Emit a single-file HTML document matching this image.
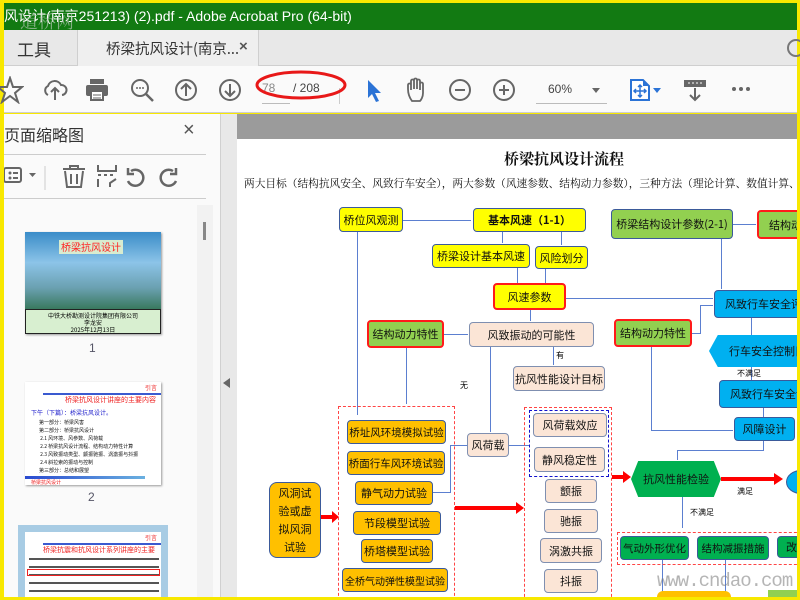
<!DOCTYPE html>
<html><head><meta charset="utf-8"><style>
*{margin:0;padding:0;box-sizing:border-box}
body{width:800px;height:600px;overflow:hidden;background:#f8e800;position:relative;font-family:"Liberation Sans","Noto Sans CJK SC",sans-serif}
.a{position:absolute}
.b{position:absolute;display:flex;align-items:center;justify-content:center;font-size:11px;color:#111;border:1px solid #3b5a9a;border-radius:4px;white-space:nowrap;overflow:hidden;font-family:"Noto Sans CJK SC",sans-serif}
.y{background:#ffff00}.g{background:#92d050}.p{background:#fbe5d6;border-color:#7f8fb0}.o{background:#ffc000}.bl{background:#00b0f0}.dg{background:#00b050}
.r{border:2px solid #ff1a1a}
.ln{position:absolute;background:#5b7fd0}
.ico{position:absolute}
</style></head><body>
<!-- title bar -->
<div class="a" style="left:4px;top:3px;width:793px;height:27px;background:#127a12;color:#fff;font-size:14px;line-height:27px;white-space:nowrap;overflow:hidden;font-family:'Liberation Sans','Noto Sans CJK SC',sans-serif">风设计(南京251213) (2).pdf - Adobe Acrobat Pro (64-bit)</div>
<div class="a" style="left:20px;top:8px;color:rgba(180,200,180,.7);font-size:18px;font-family:'Noto Serif CJK SC',serif">道桥网</div>
<!-- tab bar -->
<div class="a" style="left:4px;top:30px;width:793px;height:36px;background:#e8e8e8;border-bottom:1px solid #cfcfcf"></div>
<div class="a" style="left:4px;top:30px;width:74px;height:36px;border-right:1px solid #cfcfcf;"></div>
<div class="a" style="left:17px;top:36px;font-size:17px;color:#333;font-family:'Noto Sans CJK SC',sans-serif">工具</div>
<div class="a" style="left:78px;top:30px;width:181px;height:36px;background:#efefef;border-right:1px solid #cfcfcf"></div>
<div class="a" style="left:106px;top:38px;font-size:14.5px;color:#333;font-family:'Noto Sans CJK SC',sans-serif">桥梁抗风设计(南京...</div>
<div class="a" style="left:239px;top:38px;font-size:15px;color:#555;font-weight:bold">×</div>
<div class="a" style="left:787px;top:39px;width:18px;height:18px;border:2px solid #777;border-radius:50%"></div>
<!-- toolbar -->
<div class="a" style="left:4px;top:66px;width:793px;height:47px;background:#fafafa;border-bottom:1px solid #cfcfcf"></div>
<svg class="ico" style="left:0;top:76px" width="24" height="28"><path d="M10 2 L13 11 L22 11 L15 17 L18 26 L10 20 L2 26 L5 17 L-2 11 L7 11Z" fill="none" stroke="#666" stroke-width="2"/></svg>
<svg class="ico" style="left:42px;top:78px" width="26" height="24"><path d="M6 17 A5 5 0 0 1 6 8 A7 7 0 0 1 19 7 A5 5 0 0 1 20 17" fill="none" stroke="#666" stroke-width="2"/><path d="M13 22 V10 M9 14 L13 10 L17 14" fill="none" stroke="#666" stroke-width="2"/></svg>
<svg class="ico" style="left:85px;top:78px" width="24" height="24"><rect x="5" y="1" width="14" height="5" fill="#666"/><rect x="1" y="7" width="22" height="11" rx="2" fill="#666"/><rect x="6" y="13" width="12" height="9" fill="#fff" stroke="#666" stroke-width="2"/><path d="M8 17h8M8 20h8" stroke="#666"/></svg>
<svg class="ico" style="left:130px;top:78px" width="26" height="26"><circle cx="10" cy="10" r="8" fill="none" stroke="#666" stroke-width="2"/><path d="M16 16 L23 23" stroke="#666" stroke-width="2.5"/><circle cx="7" cy="10" r="1" fill="#666"/><circle cx="10" cy="10" r="1" fill="#666"/><circle cx="13" cy="10" r="1" fill="#666"/></svg>
<svg class="ico" style="left:175px;top:79px" width="24" height="24"><circle cx="11" cy="11" r="10" fill="none" stroke="#666" stroke-width="2"/><path d="M11 17V5M6 10l5-5 5 5" fill="none" stroke="#666" stroke-width="2"/></svg>
<svg class="ico" style="left:219px;top:79px" width="24" height="24"><circle cx="11" cy="11" r="10" fill="none" stroke="#666" stroke-width="2"/><path d="M11 5v12M6 12l5 5 5-5" fill="none" stroke="#666" stroke-width="2"/></svg>
<div class="a" style="left:262px;top:81px;font-size:12px;color:#888">78</div>
<div class="a" style="left:262px;top:103px;width:28px;border-top:1px solid #bbb"></div>
<div class="a" style="left:293px;top:81px;font-size:12px;color:#444">/ 208</div>
<div class="a" style="left:339px;top:88px;height:16px;border-left:1px solid #ccc"></div>
<svg class="ico" style="left:254px;top:68px" width="96" height="36"><ellipse cx="47" cy="17" rx="44" ry="13" fill="none" stroke="#e81818" stroke-width="3"/></svg>
<svg class="ico" style="left:366px;top:79px" width="18" height="24"><path d="M2 1 L2 19 L6 15 L10 23 L13 22 L9 14 L15 14Z" fill="#2b73d6"/></svg>
<svg class="ico" style="left:405px;top:77px" width="26" height="26"><path d="M7 24 C4 20 3 16 3 12 V8 a1.5 1.5 0 0 1 3 0 V13 V4 a1.5 1.5 0 0 1 3 0 V12 V3 a1.5 1.5 0 0 1 3 0 V12 V4 a1.5 1.5 0 0 1 3 0 V13 V7 a1.5 1.5 0 0 1 3 0 V16 C18 20 16 23 15 24Z" fill="none" stroke="#666" stroke-width="1.8"/></svg>
<svg class="ico" style="left:448px;top:79px" width="24" height="24"><circle cx="12" cy="11" r="10" fill="none" stroke="#666" stroke-width="2"/><path d="M7 11h10" stroke="#666" stroke-width="2"/></svg>
<svg class="ico" style="left:492px;top:79px" width="24" height="24"><circle cx="12" cy="11" r="10" fill="none" stroke="#666" stroke-width="2"/><path d="M7 11h10M12 6v10" stroke="#666" stroke-width="2"/></svg>
<div class="a" style="left:548px;top:82px;font-size:12px;color:#444">60%</div>
<div class="a" style="left:592px;top:88px;border:4px solid transparent;border-top:5px solid #666"></div>
<div class="a" style="left:536px;top:103px;width:71px;border-top:1px solid #bbb"></div>
<svg class="ico" style="left:629px;top:78px" width="34" height="24"><path d="M2 2 H14 L20 8 V22 H2Z" fill="#fff" stroke="#2b73d6" stroke-width="2"/><path d="M14 2 V8 H20" fill="#2b73d6"/><path d="M11 7 V19 M5 13 H17 M9 9l2-2 2 2M9 17l2 2 2-2M7 11l-2 2 2 2M15 11l2 2-2 2" fill="none" stroke="#2b73d6" stroke-width="1.5"/><path d="M24 10 h8 l-4 5z" fill="#2b73d6"/></svg>
<svg class="ico" style="left:683px;top:79px" width="26" height="24"><rect x="1" y="1" width="22" height="7" fill="#666"/><path d="M5 4h2M9 4h2M13 4h2M17 4h2" stroke="#fff"/><path d="M12 9 V21 M7 16 l5 5 5-5" fill="none" stroke="#666" stroke-width="2"/></svg>
<div class="a" style="left:732px;top:87px;width:4px;height:4px;border-radius:2px;background:#666;box-shadow:7px 0 #666,14px 0 #666"></div>
<!-- left panel -->
<div class="a" style="left:4px;top:114px;width:216px;height:483px;background:#fafafa"></div>
<div class="a" style="left:220px;top:114px;width:17px;height:483px;background:#e8e8e8;border-left:1px solid #d0d0d0"></div>
<div class="a" style="left:223px;top:378px;border:5px solid transparent;border-right:7px solid #666;border-left:0"></div>
<div class="a" style="left:4px;top:122px;font-size:16px;color:#333;font-family:'Noto Sans CJK SC',sans-serif">页面缩略图</div>
<div class="a" style="left:183px;top:119px;font-size:20px;color:#555">×</div>
<div class="a" style="left:4px;top:154px;width:202px;border-top:1px solid #ccc"></div>
<div class="a" style="left:4px;top:198px;width:202px;border-top:1px solid #ccc"></div>
<svg class="ico" style="left:4px;top:164px" width="180" height="26"><rect x="0" y="4" width="17" height="14" rx="2" fill="none" stroke="#666" stroke-width="2"/><circle cx="6" cy="9" r="1.5" fill="#666"/><circle cx="6" cy="14" r="1.5" fill="#666"/><path d="M9 9h5M9 14h5" stroke="#666" stroke-width="2"/><path d="M25 9h7l-3.5 4z" fill="#666"/><path d="M41 2v26" stroke="#ccc"/><path d="M59 5h22M66 5V2h8v3M61 7l2 16h14l2-16M67 10v10M73 10v10" fill="none" stroke="#666" stroke-width="2"/><path d="M94 1v6h18V1M94 11h3M100 11h3M106 11h3M94 15v8M112 15l-6 4v4" fill="none" stroke="#666" stroke-width="2"/><path d="M124 17 A8 8 0 1 0 127 7 M124 4 v6 h6" fill="none" stroke="#666" stroke-width="2.5"/><path d="M172 17 A8 8 0 1 1 169 7 M172 4 v6 h-6" fill="none" stroke="#666" stroke-width="2.5"/></svg>
<div class="a" style="left:197px;top:205px;width:16px;height:392px;background:#f2f2f2"></div>
<div class="a" style="left:203px;top:222px;width:3px;height:18px;background:#888"></div>
<!-- thumb1 -->
<div class="a" style="left:25px;top:232px;width:136px;height:102px;background:linear-gradient(#3a8cc8,#8cc4e8 30%,#6aa0b0 55%,#3a7a60 75%,#2a6050);box-shadow:1px 1px 2px #999"></div>
<div class="a" style="left:59px;top:240px;width:64px;height:14px;background:#d8ecd0;color:#f22;font-size:10px;text-align:center;line-height:14px;font-family:'Noto Sans CJK SC',sans-serif">桥梁抗风设计</div>
<div class="a" style="left:25px;top:309px;width:136px;height:25px;background:#d8efd0;border:1px solid #222;font-size:6px;text-align:center;line-height:7px;padding-top:2px;font-family:'Noto Sans CJK SC',sans-serif">中铁大桥勘测设计院集团有限公司<br>李龙安<br>2025年12月13日</div>
<div class="a" style="left:89px;top:341px;font-size:12px;color:#556">1</div>
<!-- thumb2 -->
<div class="a" style="left:25px;top:382px;width:136px;height:103px;background:#fff;box-shadow:1px 1px 2px #999;overflow:hidden;font-family:'Noto Sans CJK SC',sans-serif">
<div class="a" style="left:120px;top:1px;font-size:6px;color:#e22">引言</div>
<div class="a" style="left:18px;top:11px;width:118px;height:2px;background:#3a5ad0"></div>
<div class="a" style="left:40px;top:13px;font-size:7px;color:#e22">桥梁抗风设计讲座的主要内容</div>
<div class="a" style="left:6px;top:27px;font-size:6px;color:#22c;line-height:8px">下午（下篇）：桥梁抗风设计。</div>
<div class="a" style="left:14px;top:37px;font-size:5px;line-height:8px;color:#111">第一部分：桥梁风害<br>第二部分：桥梁抗风设计<br>&nbsp;2.1 风环境、风参数、风荷载<br>&nbsp;2.2 桥梁抗风设计流程、结构动力特性计算<br>&nbsp;2.3 风致振动类型、颤振驰振、涡激振与抖振<br>&nbsp;2.4 斜拉索的振动与控制<br>第三部分：总结和展望</div>
<div class="a" style="left:0;top:94px;width:120px;height:3px;background:linear-gradient(90deg,#2a4ad0,#6ab0e0)"></div>
<div class="a" style="left:6px;top:97px;font-size:5px;color:#e22">桥梁抗风设计</div>
</div>
<div class="a" style="left:88px;top:490px;font-size:12px;color:#556">2</div>
<!-- thumb3 -->
<div class="a" style="left:18px;top:525px;width:150px;height:72px;background:#a8cce4"></div>
<div class="a" style="left:25px;top:532px;width:136px;height:65px;background:#fff;overflow:hidden;font-family:'Noto Sans CJK SC',sans-serif">
<div class="a" style="left:120px;top:1px;font-size:6px;color:#e22">引言</div>
<div class="a" style="left:18px;top:11px;width:118px;height:2px;background:#3a5ad0"></div>
<div class="a" style="left:18px;top:13px;font-size:7px;color:#e22">桥梁抗震和抗风设计系列讲座的主要参考文献</div>
<div class="a" style="left:4px;top:23px;width:130px;height:40px;background:repeating-linear-gradient(#fff 0,#fff 3px,#555 3px,#555 5px,#fff 5px,#fff 8px)"></div>
<div class="a" style="left:2px;top:37px;width:133px;height:7px;border:1px solid #e22"></div>
</div>
<!-- main area -->
<div class="a" style="left:237px;top:114px;width:560px;height:25px;background:#9b9b9b"></div>
<div class="a" style="left:237px;top:139px;width:560px;height:458px;background:#fff;overflow:hidden">
<div style="position:absolute;left:0;top:0;width:800px;height:600px;transform:translate(-237px,-139px)">
<div class="a" style="left:504px;top:148px;font-size:15px;font-family:'Noto Serif CJK SC',serif;color:#111;font-weight:bold">桥梁抗风设计流程</div>
<div class="a" style="left:244px;top:176px;font-size:10.7px;font-family:'Noto Serif CJK SC',serif;color:#111;white-space:nowrap">两大目标（结构抗风安全、风致行车安全），两大参数（风速参数、结构动力参数），三种方法（理论计算、数值计算、风洞试验）</div>
<!-- lines -->
<div class="ln" style="left:403px;top:220px;width:68px;height:1px"></div>
<div class="ln" style="left:357px;top:232px;width:1px;height:183px"></div>
<div class="ln" style="left:502px;top:232px;width:1px;height:11px"></div>
<div class="ln" style="left:561px;top:232px;width:1px;height:13px"></div>
<div class="ln" style="left:517px;top:268px;width:1px;height:15px"></div>
<div class="ln" style="left:545px;top:269px;width:1px;height:14px"></div>
<div class="ln" style="left:566px;top:298px;width:147px;height:1px"></div>
<div class="ln" style="left:530px;top:310px;width:1px;height:11px"></div>
<div class="ln" style="left:444px;top:334px;width:24px;height:1px"></div>
<div class="ln" style="left:406px;top:348px;width:1px;height:56px"></div>
<div class="ln" style="left:490px;top:347px;width:1px;height:85px"></div>
<div class="ln" style="left:553px;top:347px;width:1px;height:18px"></div>
<div class="ln" style="left:733px;top:224px;width:23px;height:1px"></div>
<div class="ln" style="left:721px;top:239px;width:1px;height:50px"></div>
<div class="ln" style="left:692px;top:333px;width:8px;height:1px"></div>
<div class="ln" style="left:700px;top:305px;width:1px;height:29px"></div>
<div class="ln" style="left:700px;top:305px;width:13px;height:1px"></div>
<div class="ln" style="left:651px;top:347px;width:1px;height:83px"></div>
<div class="ln" style="left:651px;top:430px;width:82px;height:1px"></div>
<div class="ln" style="left:751px;top:318px;width:1px;height:17px"></div>
<div class="ln" style="left:751px;top:367px;width:1px;height:13px"></div>
<div class="ln" style="left:763px;top:408px;width:1px;height:9px"></div>
<div class="ln" style="left:763px;top:441px;width:1px;height:9px"></div>
<div class="ln" style="left:677px;top:450px;width:87px;height:1px"></div>
<div class="ln" style="left:677px;top:450px;width:1px;height:10px"></div>
<div class="ln" style="left:433px;top:492px;width:17px;height:1px"></div>
<div class="ln" style="left:450px;top:445px;width:1px;height:48px"></div>
<div class="ln" style="left:450px;top:445px;width:17px;height:1px"></div>
<div class="ln" style="left:509px;top:445px;width:20px;height:1px"></div>
<div class="ln" style="left:682px;top:497px;width:1px;height:31px"></div>
<div class="ln" style="left:662px;top:560px;width:1px;height:32px"></div>
<div class="ln" style="left:725px;top:560px;width:1px;height:32px"></div>
<div class="a" style="left:460px;top:380px;font-size:8px;font-family:'Noto Sans CJK SC',sans-serif">无</div>
<div class="a" style="left:556px;top:350px;font-size:8px;font-family:'Noto Sans CJK SC',sans-serif">有</div>
<div class="a" style="left:737px;top:368px;font-size:8px;font-family:'Noto Sans CJK SC',sans-serif">不满足</div>
<div class="a" style="left:737px;top:486px;font-size:8px;font-family:'Noto Sans CJK SC',sans-serif">满足</div>
<div class="a" style="left:690px;top:507px;font-size:8px;font-family:'Noto Sans CJK SC',sans-serif">不满足</div>
<!-- red arrows -->
<div class="a" style="left:321px;top:515px;width:12px;height:4px;background:#f00"></div><div class="a" style="left:332px;top:511px;border:6px solid transparent;border-left:7px solid #f00;border-right:0"></div>
<div class="a" style="left:455px;top:506px;width:62px;height:4px;background:#f00"></div><div class="a" style="left:516px;top:502px;border:6px solid transparent;border-left:8px solid #f00;border-right:0"></div>
<div class="a" style="left:612px;top:475px;width:12px;height:4px;background:#f00"></div><div class="a" style="left:623px;top:471px;border:6px solid transparent;border-left:8px solid #f00;border-right:0"></div>
<div class="a" style="left:721px;top:477px;width:54px;height:4px;background:#f00"></div><div class="a" style="left:774px;top:473px;border:6px solid transparent;border-left:9px solid #f00;border-right:0"></div>
<!-- dashed boxes -->
<div class="a" style="left:338px;top:406px;width:117px;height:200px;border:1px dashed #f44"></div>
<div class="a" style="left:524px;top:407px;width:88px;height:200px;border:1px dashed #f44"></div>
<div class="a" style="left:529px;top:410px;width:80px;height:67px;border:1.5px dashed #11c"></div>
<div class="a" style="left:617px;top:532px;width:190px;height:33px;border:1px dashed #f44"></div>
<!-- boxes -->
<div class="b y" style="left:339px;top:207px;width:64px;height:25px">桥位风观测</div>
<div class="b y" style="left:473px;top:208px;width:113px;height:24px;font-weight:bold">基本风速（1-1）</div>
<div class="b y" style="left:432px;top:244px;width:98px;height:24px">桥梁设计基本风速</div>
<div class="b y" style="left:535px;top:246px;width:53px;height:23px">风险划分</div>
<div class="b y r" style="left:493px;top:283px;width:73px;height:27px">风速参数</div>
<div class="b g r" style="left:367px;top:320px;width:77px;height:28px">结构动力特性</div>
<div class="b p" style="left:469px;top:322px;width:125px;height:25px">风致振动的可能性</div>
<div class="b g" style="left:611px;top:209px;width:122px;height:30px">桥梁结构设计参数(2-1)</div>
<div class="b g r" style="left:757px;top:210px;width:70px;height:29px;justify-content:flex-start;padding-left:10px">结构动力特性</div>
<div class="b bl" style="left:714px;top:290px;width:110px;height:28px;justify-content:flex-start;padding-left:10px">风致行车安全评估</div>
<div class="b g r" style="left:614px;top:319px;width:78px;height:28px">结构动力特性</div>
<div class="b bl" style="left:709px;top:335px;width:110px;height:32px;border:none;border-radius:0;clip-path:polygon(8% 0,100% 0,100% 100%,8% 100%,0 50%);justify-content:flex-start;padding-left:20px">行车安全控制目标</div>
<div class="b bl" style="left:719px;top:380px;width:100px;height:28px;justify-content:flex-start;padding-left:10px">风致行车安全设计</div>
<div class="b bl" style="left:734px;top:417px;width:61px;height:24px">风障设计</div>
<div class="b p" style="left:513px;top:366px;width:92px;height:25px">抗风性能设计目标</div>
<div class="b o" style="left:347px;top:420px;width:99px;height:24px;font-size:10.5px">桥址风环境模拟试验</div>
<div class="b o" style="left:347px;top:451px;width:98px;height:24px;font-size:10.5px">桥面行车风环境试验</div>
<div class="b o" style="left:355px;top:481px;width:78px;height:24px">静气动力试验</div>
<div class="b o" style="left:353px;top:511px;width:88px;height:24px">节段模型试验</div>
<div class="b o" style="left:361px;top:539px;width:72px;height:24px">桥塔模型试验</div>
<div class="b o" style="left:342px;top:568px;width:106px;height:24px;font-size:10px">全桥气动弹性模型试验</div>
<div class="b o" style="left:269px;top:482px;width:52px;height:76px;white-space:normal;text-align:center;line-height:18px;border-radius:8px;padding:0 8px">风洞试验或虚拟风洞试验</div>
<div class="b p" style="left:467px;top:433px;width:42px;height:24px">风荷载</div>
<div class="b p" style="left:533px;top:413px;width:74px;height:24px">风荷载效应</div>
<div class="b p" style="left:534px;top:447px;width:71px;height:25px">静风稳定性</div>
<div class="b p" style="left:545px;top:479px;width:52px;height:24px">颤振</div>
<div class="b p" style="left:544px;top:509px;width:54px;height:24px">驰振</div>
<div class="b p" style="left:540px;top:538px;width:62px;height:25px">涡激共振</div>
<div class="b p" style="left:544px;top:569px;width:54px;height:24px">抖振</div>
<div class="b dg" style="left:631px;top:461px;width:90px;height:36px;border:none;border-radius:0;clip-path:polygon(8% 0,92% 0,100% 50%,92% 100%,8% 100%,0 50%)">抗风性能检验</div>
<div class="b dg" style="left:620px;top:536px;width:69px;height:24px;font-size:10.5px">气动外形优化</div>
<div class="b dg" style="left:697px;top:536px;width:72px;height:24px;font-size:10.5px">结构减振措施</div>
<div class="b dg" style="left:777px;top:536px;width:40px;height:22px;justify-content:flex-start;padding-left:8px">改</div>
<div class="a" style="left:786px;top:470px;width:30px;height:24px;border-radius:50%;background:#00b0f0;border:1px solid #3b5a9a"></div>
<div class="a" style="left:657px;top:591px;width:74px;height:20px;background:#ffc000;border-radius:6px"></div>
<div class="a" style="left:768px;top:590px;width:40px;height:20px;background:#92d050"></div>
<div class="a" style="left:657px;top:570px;font-size:19px;color:rgba(120,120,120,.55);font-family:'Liberation Mono',monospace;letter-spacing:-1px">www.cndao.com</div>
</div></div>
</body></html>
